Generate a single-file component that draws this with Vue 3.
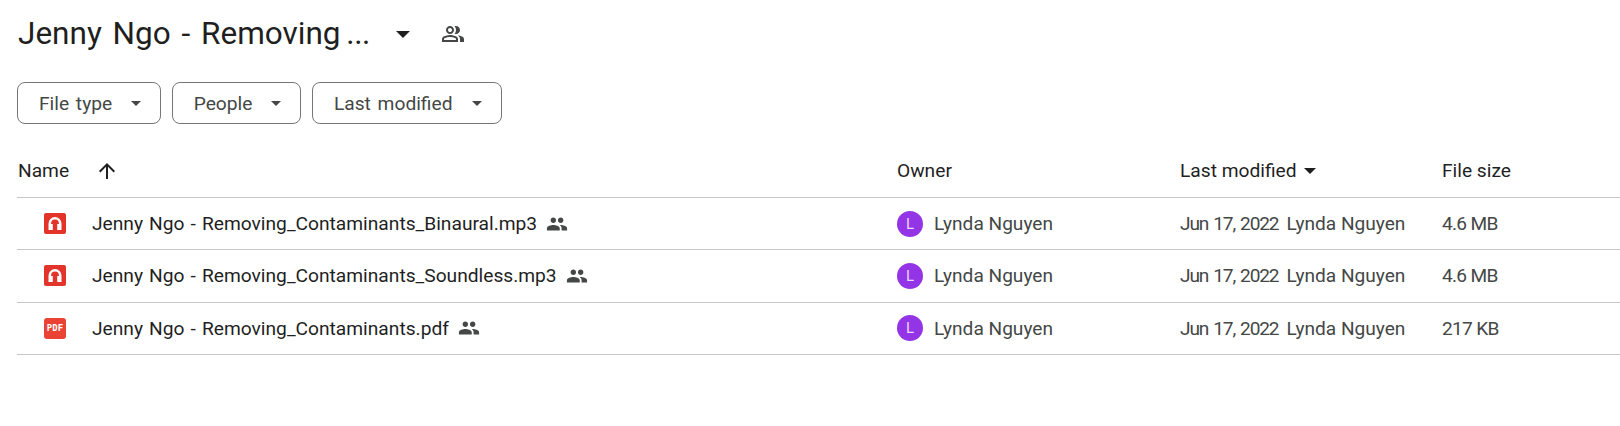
<script setup>
const rows = [
  { name: 'Jenny Ngo - Removing_Contaminants_Binaural.mp3', type: 'audio', size: '4.6 MB' },
  { name: 'Jenny Ngo - Removing_Contaminants_Soundless.mp3', type: 'audio', size: '4.6 MB' },
  { name: 'Jenny Ngo - Removing_Contaminants.pdf', type: 'pdf', size: '217 KB' },
]
const chips = ['File type', 'People', 'Last modified']
</script>

<template>
  <div class="page">
    <div class="title-row">
      <h1 class="title"><span class="lead">Jenny Ngo - Removing</span> <span class="dots">...</span></h1>
      <svg class="title-caret" width="14" height="7" viewBox="0 0 14 7"><path d="M0 0h14L7 7z" fill="#1f1f1f" /></svg>
      <svg class="shared-outline" width="24" height="24" viewBox="0 0 24 24" fill="#444746">
        <path d="M1 20v-2.800c0-.57.15-1.090.44-1.560.29-.48.68-.84 1.160-1.090a14.800 14.800 0 0 1 3.150-1.160A13.700 13.700 0 0 1 9 13c1.100 0 2.180.13 3.250.39 1.070.26 2.120.65 3.150 1.160.48.25.87.61 1.160 1.090.29.47.44.99.44 1.560V20H1zm18 0v-3c0-.73-.2-1.430-.61-2.100-.41-.68-.98-1.260-1.720-1.750.85.1 1.650.27 2.400.51.75.24 1.450.54 2.100.89.6.33 1.060.7 1.380 1.110.3.41.45.86.45 1.340v3h-4zM9 12c-1.100 0-2.040-.39-2.830-1.180A3.850 3.850 0 0 1 5 8c0-1.100.39-2.040 1.170-2.830A3.850 3.850 0 0 1 9 4c1.100 0 2.040.39 2.830 1.170C12.610 5.960 13 6.900 13 8s-.39 2.040-1.170 2.820A3.850 3.850 0 0 1 9 12zm10-4c0 1.100-.39 2.040-1.170 2.820A3.850 3.850 0 0 1 15 12c-.18 0-.42-.02-.7-.06-.29-.04-.53-.09-.7-.14.45-.53.8-1.120 1.040-1.770a5.800 5.800 0 0 0 0-4.060A6 6 0 0 0 13.600 4.200c.23-.08.47-.13.7-.16.23-.03.47-.04.7-.04 1.100 0 2.040.39 2.830 1.170C18.610 5.960 19 6.900 19 8zM3 18h12v-.8a1 1 0 0 0-.5-.85c-.9-.45-1.810-.79-2.730-1.010a11.600 11.600 0 0 0-5.540 0c-.92.22-1.830.56-2.730 1.010A1 1 0 0 0 3 17.200v.8zm6-8c.55 0 1.020-.2 1.410-.59C10.800 9.020 11 8.550 11 8s-.2-1.020-.59-1.410A1.930 1.930 0 0 0 9 6c-.55 0-1.020.2-1.410.59C7.200 6.980 7 7.450 7 8s.2 1.020.59 1.410c.39.39.86.59 1.410.59z" />
      </svg>
    </div>

    <div class="chips">
      <button v-for="c in chips" :key="c" class="chip">
        <span>{{ c }}</span>
        <svg width="10" height="5" viewBox="0 0 10 5"><path d="M0 0h10L5 5z" fill="#444746" /></svg>
      </button>
    </div>

    <div class="table">
      <div class="row head">
        <div class="cell name-head">
          <span>Name</span>
          <svg class="arrow" width="24" height="24" viewBox="0 0 24 24" fill="#1f1f1f"><path d="M11 20V7.800l-5.600 5.600L4 12l8-8 8 8-1.400 1.400L13 7.800V20h-2z" /></svg>
        </div>
        <div class="cell">Owner</div>
        <div class="cell">
          <span>Last modified</span>
          <svg class="sort-caret" width="12" height="6" viewBox="0 0 12 6"><path d="M0 0h12L6 6z" fill="#1f1f1f" /></svg>
        </div>
        <div class="cell">File size</div>
      </div>

      <div v-for="r in rows" :key="r.name" class="row item">
        <div class="cell file">
          <svg v-if="r.type === 'audio'" class="file-icon" width="22" height="21" viewBox="0 0 22 21">
            <rect width="22" height="21" rx="2" fill="#e2342a" />
            <path d="M4.500 17V10.500a6.500 6.500 0 0 1 13 0V17h-4.300v-6h1.700v-.5a3.900 3.900 0 0 0-7.800 0v.5h1.700v6z" fill="#fff" />
          </svg>
          <span v-else class="pdf-icon">PDF</span>
          <span class="file-name">{{ r.name }}</span>
          <svg class="shared" width="22" height="22" viewBox="0 0 24 24" fill="#444746">
            <path d="M16 11c1.660 0 2.990-1.340 2.990-3S17.660 5 16 5s-3 1.340-3 3 1.340 3 3 3zm-8 0c1.660 0 2.990-1.340 2.990-3S9.660 5 8 5 5 6.340 5 8s1.340 3 3 3zm0 2c-2.330 0-7 1.170-7 3.500V19h14v-2.500C15 14.170 10.330 13 8 13zm8 0c-.29 0-.62.02-.97.05 1.160.84 1.970 1.970 1.970 3.450V19h6v-2.500c0-2.330-4.670-3.500-7-3.500z" />
          </svg>
        </div>
        <div class="cell muted owner">
          <span class="avatar">L</span>
          <span>Lynda Nguyen</span>
        </div>
        <div class="cell muted modified">
          <span class="date">Jun 17, 2022</span>
          <span>Lynda Nguyen</span>
        </div>
        <div class="cell muted size">{{ r.size }}</div>
      </div>
    </div>
  </div>
</template>

<style>
html, body { background: #fff; }
</style>

<style scoped>
.page {
  width: 1620px;
  height: 426px;
  overflow: hidden;
  box-sizing: border-box;
  padding: 11px 0 0 17px;
  background: #fff;
  font-family: Roboto, "Liberation Sans", sans-serif;
  color: #1f1f1f;
}
.title-row {
  display: flex;
  align-items: center;
  height: 46px;
}
.title {
  margin: 0 0 0 1px;
  width: 378px;
  font-size: 31.500px;
  line-height: 46px;
  font-weight: 400;
  word-spacing: -2px;
  white-space: nowrap;
}
.lead { word-spacing: 3px; }
.dots { letter-spacing: -0.500px; }
.shared-outline { margin-left: 31px; }
.chips {
  display: flex;
  gap: 10.500px;
  margin-top: 25px;
}
.chip {
  display: flex;
  align-items: center;
  justify-content: space-between;
  height: 42px;
  box-sizing: border-box;
  padding: 0 19px 0 21px;
  gap: 19px;
  border: 1px solid #747775;
  border-radius: 8px;
  background: #fff;
  font: 400 19.200px Roboto, sans-serif;
  word-spacing: 2px;
  color: #444746;
}
.table { margin-top: 0; }
.row {
  display: grid;
  grid-template-columns: 880px 283px 262px 1fr;
  align-items: center;
  border-bottom: 1px solid #c7c7c7;
  box-sizing: border-box;
}
.head {
  height: 74px;
  font-size: 19.200px;
  font-weight: 400;
  padding-top: 20px;
}
.item { height: 52.300px; font-size: 19.100px; }
.cell { display: flex; align-items: center; white-space: nowrap; }
.name-head { padding-left: 1px; }
.arrow { margin-left: 26px; }
.sort-caret { margin-left: 7px; }
.file { padding-left: 27px; }
.file-icon { flex: none; }
.pdf-icon {
  width: 22px;
  height: 21px;
  flex: none;
  display: flex;
  align-items: center;
  justify-content: center;
  border-radius: 3px;
  background: #ea4335;
  color: #fff;
  font: 700 9px "DejaVu Sans Mono", monospace;
}
.file-name { margin-left: 26px; font-size: 19.200px; word-spacing: 1.300px; color: #1f1f1f; }
.shared { margin-left: 9px; }
.muted { color: #444746; }
.owner { gap: 11px; }
.modified { gap: 8px; }
.date { letter-spacing: -1.150px; word-spacing: 1.500px; }
.size { letter-spacing: -0.700px; }
.avatar {
  width: 26px;
  height: 26px;
  border-radius: 50%;
  background: #9334e6;
  color: #e9d5fb;
  font-size: 15px;
  display: flex;
  align-items: center;
  justify-content: center;
}
</style>
